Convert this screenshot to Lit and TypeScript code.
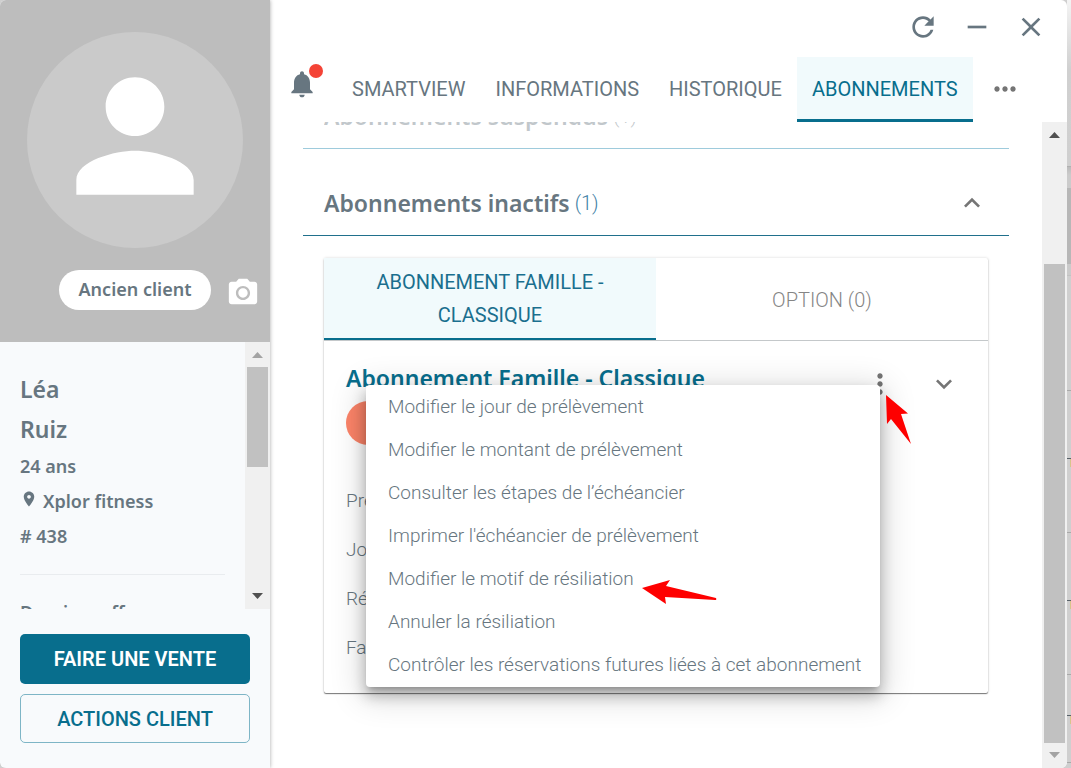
import { LitElement, html, css, svg } from "lit";
import { customElement, property } from "lit/decorators.js";

const icon = (d: string, size: number, cls = "") => html`
  <svg class="icon ${cls}" width=${size} height=${size} viewBox="0 0 24 24" aria-hidden="true">${svg`<path d=${d} />`}</svg>
`;

const PERSON = "M12 12c2.21 0 4-1.79 4-4s-1.79-4-4-4-4 1.79-4 4 1.79 4 4 4zm0 2c-2.67 0-8 1.34-8 4v2h16v-2c0-2.66-5.33-4-8-4z";
const CAMERA = "M9 2L7.17 4H4c-1.1 0-2 .9-2 2v12c0 1.1.9 2 2 2h16c1.1 0 2-.9 2-2V6c0-1.1-.9-2-2-2h-3.17L15 2H9zm3 15c-2.76 0-5-2.24-5-5s2.24-5 5-5 5 2.24 5 5-2.24 5-5 5zm0-1.7c1.82 0 3.3-1.48 3.3-3.3s-1.48-3.3-3.3-3.3-3.3 1.48-3.3 3.3 1.48 3.3 3.3 3.3z";
const PIN = "M12 2C8.13 2 5 5.13 5 9c0 5.25 7 13 7 13s7-7.75 7-13c0-3.87-3.13-7-7-7zm0 9.5c-1.38 0-2.5-1.12-2.5-2.5s1.12-2.5 2.5-2.5 2.5 1.12 2.5 2.5-1.12 2.5-2.5 2.5z";
const BELL = "M12 22c1.1 0 2-.9 2-2h-4c0 1.1.9 2 2 2zm6-6v-5c0-3.07-1.64-5.64-4.5-6.32V4c0-.83-.67-1.5-1.5-1.5s-1.5.67-1.5 1.5v.68C7.63 5.36 6 7.92 6 11v5l-2 2v1h16v-1l-2-2z";
const REFRESH = "M17.65 6.35C16.2 4.9 14.21 4 12 4c-4.42 0-7.99 3.58-7.99 8s3.57 8 7.99 8c3.73 0 6.84-2.55 7.73-6h-2.08c-.82 2.33-3.04 4-5.65 4-3.31 0-6-2.69-6-6s2.69-6 6-6c1.66 0 3.14.69 4.22 1.78L13 11h7V4l-2.35 2.35z";
const MINUS = "M19 13H5v-2h14v2z";
const CLOSE = "M19 6.41L17.59 5 12 10.59 6.41 5 5 6.41 10.59 12 5 17.59 6.41 19 12 13.41 17.59 19 19 17.59 13.41 12z";
const MORE_H = "M6 10c-1.1 0-2 .9-2 2s.9 2 2 2 2-.9 2-2-.9-2-2-2zm12 0c-1.1 0-2 .9-2 2s.9 2 2 2 2-.9 2-2-.9-2-2-2zm-6 0c-1.1 0-2 .9-2 2s.9 2 2 2 2-.9 2-2-.9-2-2-2z";
const MORE_V = "M12 8c1.1 0 2-.9 2-2s-.9-2-2-2-2 .9-2 2 .9 2 2 2zm0 2c-1.1 0-2 .9-2 2s.9 2 2 2 2-.9 2-2-.9-2-2-2zm0 6c-1.1 0-2 .9-2 2s.9 2 2 2 2-.9 2-2-.9-2-2-2z";
const UP = "M12 8l-6 6 1.41 1.41L12 10.83l4.59 4.58L18 14z";
const DOWN = "M16.59 8.59L12 13.17 7.41 8.59 6 10l6 6 6-6z";

const base = css`
  * { box-sizing: border-box; }
  button {
    font: inherit;
    color: inherit;
    background: none;
    border: 0;
    padding: 0;
    margin: 0;
    cursor: pointer;
  }
  h1, h2, h3, p, ul { margin: 0; padding: 0; }
  .icon { display: block; fill: currentColor; flex: none; }
`;

@customElement("scroll-track")
export class ScrollTrack extends LitElement {
  @property({ type: Boolean }) atTop = false;
  @property({ type: Boolean }) atEnd = false;
  @property({ type: Number }) before = 0;
  @property({ type: Number }) size = 50;

  static styles = css`
    :host {
      display: flex;
      flex-direction: column;
      width: 25px;
      flex: none;
      background: #f0f0f0;
    }
    .arrow { flex: none; display: block; width: 25px; height: 25px; fill: #505050; }
    .off { fill: #a3a3a3; }
    .track { flex: 1; display: flex; flex-direction: column; align-items: center; min-height: 0; }
    .thumb { width: 21px; background: #c1c1c1; flex: none; }
  `;

  render() {
    return html`
      <svg class="arrow ${this.atTop ? "off" : ""}" viewBox="0 0 25 25"><path d="M7 16h11L12.500 10z" /></svg>
      <div class="track">
        <div style="height:${this.before}%"></div>
        <div class="thumb" style="height:${this.size}%"></div>
      </div>
      <svg class="arrow ${this.atEnd ? "off" : ""}" viewBox="0 0 25 25"><path d="M7 9h11L12.500 15z" /></svg>
    `;
  }
}

@customElement("client-sidebar")
export class ClientSidebar extends LitElement {
  static styles = [base, css`
    :host {
      display: flex;
      flex-direction: column;
      width: 270px;
      flex: none;
      background: #f8fafc;
      color: #677680;
      box-shadow: 0 0 4px rgba(0, 0, 0, 0.35);
      z-index: 1;
      font-family: "Noto Sans", sans-serif;
      font-size: 18px;
      font-weight: 600;
    }
    .portrait {
      background: #bdbdbd;
      height: 342px;
      flex: none;
      display: flex;
      flex-direction: column;
      align-items: center;
      padding-top: 32px;
    }
    .avatar {
      width: 216px;
      height: 216px;
      border-radius: 50%;
      background: #cacaca;
      color: #fff;
      display: grid;
      place-items: center;
      padding-bottom: 8px;
    }
    .status {
      align-self: stretch;
      display: grid;
      grid-template-columns: 1fr auto 1fr;
      align-items: center;
      margin-top: 22px;
    }
    .pill {
      grid-column: 2;
      background: #fff;
      border-radius: 20px;
      height: 40px;
      line-height: 38px;
      width: 152px;
      text-align: center;
    }
    .camera { color: #fff; margin-left: 15px; justify-self: start; margin-top: 6px; }
    .details { flex: 1; display: flex; min-height: 0; }
    .info { flex: 1; overflow: hidden; padding: 27px 20px 0; }
    .name { font-size: 23px; line-height: 40px; font-weight: 600; }
    .line { line-height: 35px; display: flex; align-items: center; }
    .pin { margin: 0 5px 6px 0; }
    .next { border-top: 1px solid #e9ecef; margin-top: 20px; padding-top: 20px; line-height: 35px; white-space: nowrap; }
    .actions {
      flex: none;
      display: flex;
      flex-direction: column;
      gap: 10px;
      padding: 25px 20px;
      font-family: Roboto, sans-serif;
      font-size: 20px;
    }
    .sell { height: 50px; border-radius: 5px; background: #086e8d; color: #fff; font-weight: 600; }
    .more { height: 49px; border-radius: 5px; border: 1px solid #7eb5c6; color: #086e8d; font-weight: 500; }
  `];

  render() {
    return html`
      <div class="portrait">
        <div class="avatar">${icon(PERSON, 176)}</div>
        <div class="status">
          <span class="pill">Ancien client</span>
          <button class="camera" aria-label="Changer la photo">${icon(CAMERA, 34)}</button>
        </div>
      </div>
      <div class="details">
        <div class="info">
          <h1 class="name">Léa</h1>
          <h1 class="name">Ruiz</h1>
          <p class="line">24 ans</p>
          <p class="line">${icon(PIN, 18, "pin")}Xplor fitness</p>
          <p class="line"># 438</p>
          <p class="next">Dernier coffre</p>
        </div>
        <scroll-track .atTop=${true} .before=${0} .size=${46}></scroll-track>
      </div>
      <div class="actions">
        <button class="sell">FAIRE UNE VENTE</button>
        <button class="more">ACTIONS CLIENT</button>
      </div>
    `;
  }
}

@customElement("context-menu")
export class ContextMenu extends LitElement {
  @property({ attribute: false }) items: string[] = [];

  static styles = [base, css`
    :host {
      display: block;
      background: #fff;
      border-radius: 4px;
      box-shadow: 0 5px 5px -3px rgba(0, 0, 0, 0.2), 0 8px 14px 1px rgba(0, 0, 0, 0.24), 0 6px 32px 6px rgba(0, 0, 0, 0.14);
    }
    ul { list-style: none; padding-bottom: 1px; }
    li { height: 43px; }
    button {
      width: 100%;
      height: 43px;
      padding: 0 19px 0 22px;
      text-align: left;
      white-space: nowrap;
      font-size: 19px;
      font-weight: 300;
    }
  `];

  render() {
    return html`<ul role="menu">
      ${this.items.map((t) => html`<li role="none"><button role="menuitem">${t}</button></li>`)}
    </ul>`;
  }
}

@customElement("app-root")
export class AppRoot extends LitElement {
  static styles = [base, css`
    :host {
      display: flex;
      height: 100vh;
      background: #cfcfcf;
      font-family: Roboto, sans-serif;
      color: #677680;
      overflow: hidden;
    }
    .window {
      flex: 1;
      min-width: 0;
      display: flex;
      background: #fff;
      border-radius: 6px;
      overflow: hidden;
    }
    .behind { width: 4px; flex: none; display: flex; flex-direction: column; overflow: hidden; }
    .behind .head { height: 167px; flex: none; background: linear-gradient(#f4f4f4, #d0d0d0 70px, #cfcfcf); border-bottom: 1px solid #b0b0b0; }
    .behind .sub { height: 21px; background: linear-gradient(#bbb, #cbcbcb 8px); }
    .behind .bar { height: 76px; background: #b7b7b7; }
    .behind .gap { height: 12px; background: #cbcbcb; border-bottom: 1px solid #c2c2c2; }
    .behind .first { height: 115px; border-bottom: 1px solid #a9a9a9; }
    .behind .row { height: 142px; flex: none; border-bottom: 1px solid #a9a9a9; padding-top: 67px; }
    .behind .row.short { height: 88px; padding-top: 40px; }
    .mark { height: 9px; border-top: 1px solid #59636a; background: linear-gradient(90deg, transparent 3px, #d8c48a 3px); }
    .main { flex: 1; min-width: 0; display: flex; flex-direction: column; }
    .controls { height: 57px; flex: none; display: flex; justify-content: flex-end; align-items: flex-start; gap: 22px; padding: 11px 20px 0 0; }
    .tabs { height: 65px; flex: none; display: flex; padding-left: 16px; font-size: 20px; }
    .tab { padding: 2px 15px 0; border-bottom: 3px solid transparent; white-space: nowrap; }
    .tab.on { color: #086e8d; background: #f1fafc; border-color: #086e8d; }
    .bell { position: relative; width: 32px; margin-right: 19px; display: grid; place-items: center; padding-bottom: 11px; }
    .dot { position: absolute; left: 23px; top: 7px; width: 14px; height: 14px; border-radius: 50%; background: #f44336; }
    .dots { color: #757575; padding: 0 16px 2px; }
    .body { flex: 1; min-height: 0; display: flex; }
    .content { flex: 1; min-width: 0; overflow: hidden; padding: 0 33px; }
    .section { display: flex; align-items: center; padding: 0 21px; }
    h2 { font-family: "Noto Sans", sans-serif; font-size: 23px; font-weight: 600; line-height: 34px; }
    .count { font-size: 20px; font-weight: 300; color: #3f7fa5; margin-left: 5px; line-height: 34px; }
    .suspended { margin-top: -23px; height: 50px; align-items: flex-start; border-bottom: 1px solid #9ecbdc; }
    .suspended h2, .suspended .count { color: #677680; opacity: 0.4; }
    .inactive { height: 87px; padding-top: 22px; border-bottom: 1px solid #20708c; }
    .toggle { margin-left: auto; color: #757575; }
    .card { margin: 22px 21px 0; height: 435px; position: relative; box-shadow: 0 1px 1px rgba(0, 0, 0, 0.5), 0 0 3px rgba(0, 0, 0, 0.16); background: #fff; border-radius: 2px; }
    .subtabs { display: grid; grid-template-columns: 1fr 1fr; height: 83px; border-bottom: 1px solid #c4c8ca; font-size: 20px; line-height: 33px; }
    .subtab { font-weight: 300; color: #858585; padding: 2px 40px 0; }
    .subtab.on { font-weight: 400; color: #1a6f8e; background: #f1fafc; border-bottom: 2px solid #086e8d; }
    .sub-head { display: flex; align-items: flex-start; padding: 20px 28px 0 22px; height: 60px; }
    h3 { font-family: "Noto Sans", sans-serif; font-size: 23px; line-height: 34px; font-weight: 600; color: #086e8d; flex: 1; white-space: nowrap; }
    .tools { display: flex; gap: 32px; color: #757575; padding-top: 7px; }
    .chip { width: 140px; height: 44px; border-radius: 22px; background: #fc8469; margin-left: 22px; }
    .facts { padding: 31px 22px 0; font-size: 19px; font-weight: 300; line-height: 49px; }
    .menu { position: absolute; left: 42px; top: 127px; }
    .arrow { position: absolute; fill: #fe0000; }
    .arrow.up { left: 562px; top: 137px; }
    .arrow.side { left: 318px; top: 321px; }
  `];

  render() {
    const tabs = ["SMARTVIEW", "INFORMATIONS", "HISTORIQUE", "ABONNEMENTS"];
    const items = [
      "Modifier le jour de prélèvement",
      "Modifier le montant de prélèvement",
      "Consulter les étapes de l’échéancier",
      "Imprimer l'échéancier de prélèvement",
      "Modifier le motif de résiliation",
      "Annuler la résiliation",
      "Contrôler les réservations futures liées à cet abonnement",
    ];
    return html`
      <div class="window">
        <client-sidebar></client-sidebar>
        <div class="main">
          <div class="controls">
            <button aria-label="Actualiser">${icon(REFRESH, 32)}</button>
            <button aria-label="Réduire">${icon(MINUS, 32)}</button>
            <button aria-label="Fermer">${icon(CLOSE, 32)}</button>
          </div>
          <nav class="tabs">
            <button class="bell" aria-label="Notifications">${icon(BELL, 32)}<span class="dot"></span></button>
            ${tabs.map((t, i) => html`<button class="tab ${i === 3 ? "on" : ""}">${t}</button>`)}
            <button class="dots" aria-label="Plus">${icon(MORE_H, 32)}</button>
          </nav>
          <div class="body">
            <div class="content">
              <div class="section suspended"><h2>Abonnements suspendus</h2><span class="count">(1)</span></div>
              <div class="section inactive">
                <h2>Abonnements inactifs</h2><span class="count">(1)</span>
                <button class="toggle" aria-label="Replier">${icon(UP, 32)}</button>
              </div>
              <div class="card">
                <div class="subtabs">
                  <button class="subtab on">ABONNEMENT FAMILLE - CLASSIQUE</button>
                  <button class="subtab">OPTION (0)</button>
                </div>
                <div class="sub-head">
                  <h3>Abonnement Famille - Classique</h3>
                  <div class="tools">
                    <button aria-label="Options">${icon(MORE_V, 32)}</button>
                    <button aria-label="Déplier">${icon(DOWN, 32)}</button>
                  </div>
                </div>
                <div class="chip"></div>
                <div class="facts">
                  <p>Pré</p>
                  <p>Jour</p>
                  <p>Rés</p>
                  <p>Fam</p>
                </div>
                <context-menu class="menu" .items=${items}></context-menu>
                <svg class="arrow up" width="26" height="50" viewBox="0 0 26 50"><path d="M0 0L22 18.500L15 19L25 49L5 24L1 29Z" /></svg>
                <svg class="arrow side" width="76" height="26" viewBox="0 0 76 26"><path d="M0 9L28 1L24 7L74 19Q75 21 73 21L23 18L24 25Z" /></svg>
              </div>
            </div>
            <scroll-track .atEnd=${true} .before=${19.6} .size=${80.4}></scroll-track>
          </div>
        </div>
      </div>
      <div class="behind">
        <div class="head"></div><div class="sub"></div><div class="bar"></div><div class="gap"></div><div class="first"></div>
        <div class="row"><div class="mark"></div></div>
        <div class="row"><div class="mark"></div></div>
        <div class="row short"><div class="mark"></div></div>
      </div>
    `;
  }
}
